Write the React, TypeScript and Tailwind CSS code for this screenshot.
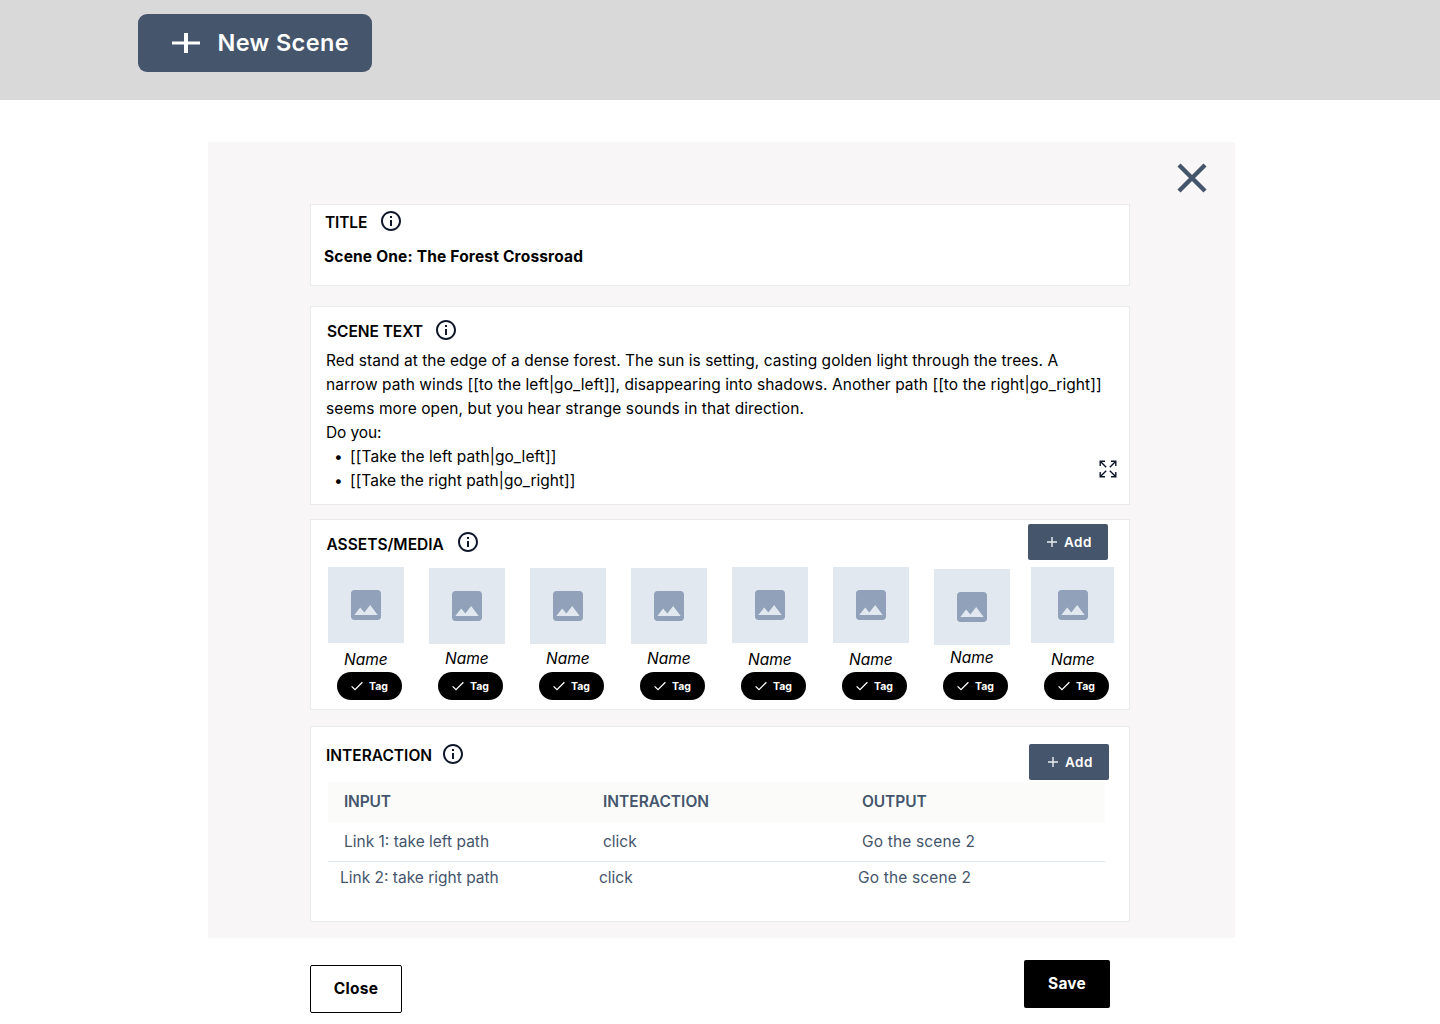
import type { ReactNode } from "react";

const assets = [
  { id: 1, box: "w-[76px]", icon: "ml-[18px]", name: "top-0" },
  { id: 2, box: "mt-px w-[76px]", icon: "ml-[18px]", name: "-top-px" },
  { id: 3, box: "mt-px w-[76px]", icon: "ml-[18px]", name: "-top-px" },
  { id: 4, box: "mt-px w-[76px]", icon: "ml-[18px]", name: "-top-px" },
  { id: 5, box: "w-[76px]", icon: "ml-[18px]", name: "top-0" },
  { id: 6, box: "w-[76px]", icon: "ml-[18px]", name: "top-0" },
  { id: 7, box: "mt-0.5 w-[76px]", icon: "ml-[18px]", name: "-top-0.5" },
  { id: 8, box: "-ml-1 w-[83px]", icon: "ml-[22px]", name: "top-0" },
];

function InfoIcon({ className = "" }: { className?: string }) {
  return (
    <svg viewBox="0 0 24 24" className={`size-6 shrink-0 fill-[#0f172a] ${className}`}>
      <path d="M11 7h2v2h-2V7zm0 4h2v6h-2v-6zm1-9C6.48 2 2 6.48 2 12s4.48 10 10 10 10-4.48 10-10S17.52 2 12 2zm0 18c-4.41 0-8-3.59-8-8s3.59-8 8-8 8 3.59 8 8-3.59 8-8 8z" />
    </svg>
  );
}

function ImageIcon() {
  return (
    <svg viewBox="0 0 24 24" className="size-10 shrink-0 fill-slate-400">
      <path d="M21 19V5c0-1.1-.9-2-2-2H5c-1.1 0-2 .9-2 2v14c0 1.1.9 2 2 2h14c1.1 0 2-.9 2-2zM8.5 13.5l2.5 3.01L14.5 12l4.5 6H5l3.5-4.5z" />
    </svg>
  );
}

function Card({ className, children }: { className: string; children: ReactNode }) {
  return <section className={`w-[820px] shrink-0 border border-[#e9ebeb] bg-white ${className}`}>{children}</section>;
}

function Heading({ className = "", children }: { className?: string; children: ReactNode }) {
  return <h2 className={`text-[15.5px] leading-6 font-semibold whitespace-nowrap ${className}`}>{children}</h2>;
}

function AddButton({ className }: { className: string }) {
  return (
    <button className={`flex h-9 w-20 shrink-0 items-center rounded-xs bg-slate-600 pl-[18px] text-white ${className}`}>
      <svg viewBox="0 0 12 12" className="mr-1.5 size-3 fill-none stroke-white/90 stroke-[1.4]">
        <path d="M1 6h10M6 1v10" />
      </svg>
      <span className="text-[13.5px] leading-5 font-semibold tracking-[0.5px]">Add</span>
    </button>
  );
}

function Asset({ box, icon, name }: { box: string; icon: string; name: string }) {
  return (
    <div className="flex h-[133px] w-[76px] flex-col">
      <div className="h-[80px]">
        <div className={`flex h-[76px] items-center bg-slate-200 ${box}`}>
          <div className={icon}>
            <ImageIcon />
          </div>
        </div>
      </div>
      <div className={`relative ml-4 pt-px text-[15.5px] leading-6 italic ${name}`}>Name</div>
      <div className="ml-[9px] flex h-7 w-[65px] shrink-0 items-center rounded-full bg-black pl-3.5 text-white">
        <svg viewBox="0 0 12 10" className="mr-1.5 h-2.5 w-3 fill-none stroke-white stroke-[1.3]">
          <path d="M0.6 5.4 4 8.7 11.4 1.2" />
        </svg>
        <span className="pt-px text-[10.5px] leading-4 font-bold">Tag</span>
      </div>
    </div>
  );
}

export default function App() {
  return (
    <div className="flex h-[1024px] w-[1440px] flex-col overflow-hidden bg-white font-['Inter',sans-serif] text-black">
      <header className="h-[100px] shrink-0 bg-[#d9d9d9] pt-3.5 pl-[138px]">
        <button className="flex h-[58px] w-[234px] items-center rounded-[9px] bg-slate-600 pl-[33.5px] text-white">
          <svg viewBox="0 0 28 20" className="mr-[18px] h-5 w-7 fill-white">
            <path d="M0 8.5h28v3H0zM12 0h4v20h-4z" />
          </svg>
          <span className="text-[23.5px] leading-8 font-semibold tracking-[0.36px] whitespace-nowrap">New Scene</span>
        </button>
      </header>

      <main className="mt-[42px] ml-[208px] flex h-[796px] w-[1027px] shrink-0 flex-col bg-[#f8f6f7] pl-[102px]">
        <div className="flex h-[62px] shrink-0 justify-end pt-5 pr-[27px]">
          <svg viewBox="0 0 32 32" className="size-8 fill-none stroke-slate-600 stroke-[4.4]">
            <path d="M3 3l26 26M29 3L3 29" />
          </svg>
        </div>

        <Card className="h-[82px] pt-1 pl-[13px]">
          <div className="flex">
            <Heading className="mt-0.5 ml-px w-[54px] tracking-[-0.15px]">TITLE</Heading>
            <InfoIcon />
          </div>
          <p className="mt-[9.5px] text-[15.5px] leading-6 font-bold tracking-[0.18px]">Scene One: The Forest Crossroad</p>
        </Card>

        <Card className="relative mt-5 h-[199px] pt-[11px] pl-[15px]">
          <div className="flex">
            <Heading className="mt-0.5 ml-px w-[107px] tracking-[-0.05px]">SCENE TEXT</Heading>
            <InfoIcon />
          </div>
          <div className="mt-[5px] text-[15.5px] leading-6 whitespace-nowrap">
            <p className="tracking-[0.03px]">Red stand at the edge of a dense forest. The sun is setting, casting golden light through the trees. A</p>
            <p className="tracking-[0.07px]">narrow path winds [[to the left|go_left]], disappearing into shadows. Another path [[to the right|go_right]]</p>
            <p className="tracking-[0.09px]">seems more open, but you hear strange sounds in that direction.</p>
            <p className="tracking-[-0.1px]">Do you:</p>
            <ul>
              <li className="flex tracking-[0.08px]"><span className="w-6 pl-2">•</span>[[Take the left path|go_left]]</li>
              <li className="flex tracking-[0.01px]"><span className="w-6 pl-2">•</span>[[Take the right path|go_right]]</li>
            </ul>
          </div>
          <svg viewBox="0 0 18 18" className="absolute right-3 bottom-[26px] size-[18px] fill-none stroke-[#0f172a] stroke-[1.4]">
            <path d="M1.2 6V1.2H6M1.2 1.2l6 6M12 1.2h4.8V6M16.8 1.2l-6 6M1.2 12v4.8H6M1.2 16.8l6-6M12 16.8h4.8V12M16.8 16.8l-6-6" />
          </svg>
        </Card>

        <Card className="mt-3.5 h-[191px] pt-1 pl-[15px]">
          <div className="flex h-[43px]">
            <Heading className="mt-[9px] w-[130px] pl-[0.5px]">ASSETS/MEDIA</Heading>
            <InfoIcon className="mt-1.5" />
            <AddButton className="mr-[21px] ml-auto" />
          </div>
          <div className="ml-0.5 flex gap-[25px]">
            {assets.map((a) => (
              <Asset key={a.id} box={a.box} icon={a.icon} name={a.name} />
            ))}
          </div>
        </Card>

        <Card className="mt-4 h-[196px] pt-[15px] pl-[15px]">
          <div className="flex h-10">
            <Heading className="mt-0.5 w-[115px]">INTERACTION</Heading>
            <InfoIcon />
            <AddButton className="mt-0.5 mr-5 ml-auto" />
          </div>
          <div className="ml-0.5 w-[777px] text-[15.5px] leading-6 text-slate-600">
            <div className="grid h-10 grid-cols-[259px_259px_1fr] items-center bg-[#fbfcfa] pl-4 font-semibold">
              <span className="tracking-[-0.2px]">INPUT</span>
              <span>INTERACTION</span>
              <span className="tracking-[-0.1px]">OUTPUT</span>
            </div>
            <div className="grid h-10 grid-cols-[259px_259px_1fr] items-center border-b border-[#dfe7ee] pl-4">
              <span>Link 1: take left path</span>
              <span>click</span>
              <span className="tracking-[0.15px]">Go the scene 2</span>
            </div>
            <div className="grid h-8 grid-cols-[259px_259px_1fr] items-center pl-3">
              <span>Link 2: take right path</span>
              <span>click</span>
              <span className="tracking-[0.15px]">Go the scene 2</span>
            </div>
          </div>
        </Card>
      </main>

      <footer className="ml-[310px] flex w-[800px] items-start justify-between pt-[22px]">
        <button className="mt-[5px] h-12 w-[92px] rounded-xs border border-black bg-white text-[15.5px] font-bold tracking-[0.3px]">Close</button>
        <button className="h-12 w-[86px] rounded-xs bg-black text-[15.5px] font-bold tracking-[0.2px] text-white">Save</button>
      </footer>
    </div>
  );
}
